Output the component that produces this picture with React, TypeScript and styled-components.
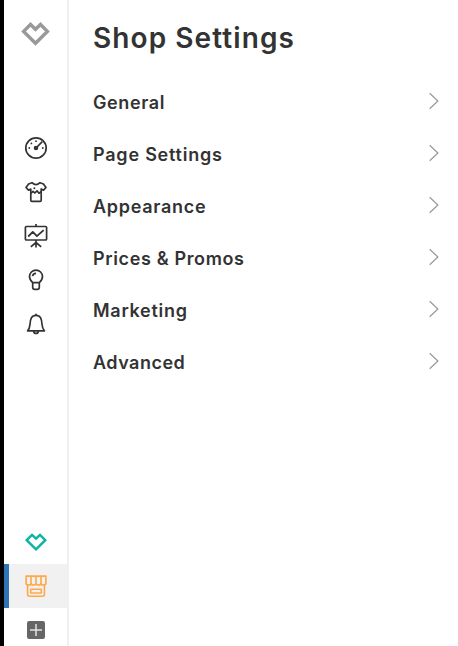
import React from "react";
import styled, { createGlobalStyle } from "styled-components";

const GlobalStyle = createGlobalStyle`
  * { box-sizing: border-box; }
  body { margin: 0; background: #fff; overflow: hidden; }
`;

const Layout = styled.div`
  display: flex;
  height: 646px;
  font-family: Inter, "Open Sans", sans-serif;
  color: #333;
  background: #fff;
`;

const Sidebar = styled.nav`
  display: flex;
  flex-direction: column;
  width: 69px;
  flex: none;
  border-left: 4px solid #000;
  border-right: 2px solid #f0f0f0;
`;

const Brand = styled.div`
  height: 126px;
  padding: 18px 0 0 16px;
  color: #999;
`;

const NavGroup = styled.div<{ $bottom?: boolean }>`
  display: flex;
  flex-direction: column;
  margin-top: ${(p) => (p.$bottom ? "auto" : "0")};
  margin-bottom: ${(p) => (p.$bottom ? "-6px" : "0")};
`;

const NavItem = styled.a<{ $color?: string; $active?: boolean }>`
  display: flex;
  align-items: center;
  height: 44px;
  padding-left: ${(p) => (p.$active ? "11px" : "16px")};
  border-left: ${(p) => (p.$active ? "5px solid #2f74b5" : "none")};
  background: ${(p) => (p.$active ? "#f1f1f1" : "transparent")};
  color: ${(p) => p.$color ?? "#333"};
`;

const Glyph = styled.svg<{ $stroke?: number }>`
  display: block;
  width: 32px;
  height: 32px;
  flex: none;
  fill: none;
  stroke: currentColor;
  stroke-width: ${(p) => p.$stroke ?? 1.7};
`;

const Main = styled.main`
  flex: 1;
  padding: 18px 18px 0 24px;
`;

const Title = styled.h1`
  margin: 0 0 19px;
  height: 40px;
  font-size: 28px;
  font-weight: 600;
  line-height: 40px;
  letter-spacing: 1.08px;
  white-space: nowrap;
`;

const SettingsRow = styled.a`
  display: flex;
  align-items: center;
  justify-content: space-between;
  height: 52px;
`;

const Label = styled.span<{ $tracking: number }>`
  font-size: 18px;
  font-weight: 600;
  line-height: 24px;
  letter-spacing: ${(p) => p.$tracking}px;
  white-space: nowrap;
`;

const Chevron = styled.svg`
  width: 12px;
  height: 18px;
  margin-bottom: 4px;
  fill: none;
  stroke: #999;
  stroke-width: 1.2;
`;

const rows = [
  { label: "General", tracking: 0.6 },
  { label: "Page Settings", tracking: 0.78 },
  { label: "Appearance", tracking: 0.72 },
  { label: "Prices & Promos", tracking: 0.64 },
  { label: "Marketing", tracking: 0.72 },
  { label: "Advanced", tracking: 0.5 },
];

const GaugeIcon = () => (
  <Glyph viewBox="0 0 32 32">
    <circle cx="16" cy="16" r="10.2" />
    <path d="M16 16 22.3 9.7" />
    <g fill="currentColor" stroke="none">
      <circle cx="16" cy="16" r="2.3" />
      <circle cx="9.3" cy="16" r=".9" />
      <circle cx="11.4" cy="11.4" r=".9" />
      <circle cx="16" cy="9.2" r=".9" />
      <circle cx="22.8" cy="16" r=".9" />
    </g>
  </Glyph>
);

const ShirtIcon = () => (
  <Glyph viewBox="0 0 32 32" strokeLinejoin="round">
    <path d="M12 6.7Q16 10.5 20 6.7L23.4 8 26 11.4 23.5 14.2 21.2 13V24.3Q21.2 25.3 20.2 25.3H11.8Q10.8 25.3 10.8 24.3V13L8.5 14.2 6 11.4 8.6 8Z" />
    <path d="M10.8 17.4 13 15.3 14.8 17 17 14.8 19 17.2 21.2 15.8" />
    <circle cx="14.4" cy="12.2" r="1" fill="currentColor" stroke="none" />
  </Glyph>
);

const BoardIcon = () => (
  <Glyph viewBox="0 0 32 32" strokeLinejoin="round">
    <rect x="5.4" y="6.5" width="21.2" height="13.5" rx="1" />
    <path d="M16 4V6.5M16 20V27.5M16 22.5 10.8 26.9M16 22.5 21.2 26.9" />
    <path d="M8.2 16.5 12.8 11.9 16.9 16.2 23.7 10.2" strokeWidth="1.8" />
  </Glyph>
);

const BulbIcon = () => (
  <Glyph viewBox="0 0 32 32">
    <path d="M12.7 18.7C11 17.3 9.5 15.3 9.5 12.6A6.5 6.5 0 0 1 22.5 12.6C22.5 15.3 21 17.3 19.3 18.7Z" />
    <path d="M12.7 18.7V23.2Q12.7 25.3 14.8 25.3H17.2Q19.3 25.3 19.3 23.2V18.7M12.5 12.2Q13 9.6 16 9.4" />
  </Glyph>
);

const BellIcon = () => (
  <Glyph viewBox="0 0 32 32" strokeLinejoin="round">
    <path d="M7.6 22.8C9.3 21 9.7 19.5 10 16.3C10.4 11.3 11.2 7.3 16 7.3S21.6 11.3 22 16.3C22.3 19.5 22.7 21 24.4 22.8Z" />
    <path d="M13.6 23Q14 25.5 16 25.5T18.4 23M16 5.7V7.3" />
  </Glyph>
);

const HeartIcon = () => (
  <Glyph viewBox="0 0 32 32" $stroke={2.4}>
    <path d="M6.7 14.2 12 8.9 16 12.7 20 8.9 25.3 14.2 16 23.4Z" />
  </Glyph>
);

const ShopIcon = () => (
  <Glyph viewBox="0 0 32 32" $stroke={1.6} strokeLinejoin="round">
    <path d="M6.1 6.1H25.9V13.2Q25.9 15 23.5 15 21 15 21 13.2 21 15 18.5 15 16 15 16 13.2 16 15 13.5 15 11 15 11 13.2 11 15 8.5 15 6.1 15 6.1 13.2ZM11 13.2V6.1M16 13.2V6.1M21 13.2V6.1" />
    <path d="M7.6 15V24.7Q7.6 26.2 9.1 26.2H22.9Q24.4 26.2 24.4 24.7V15M10.7 19.2H21.3V23H10.7Z" />
  </Glyph>
);

const AddIcon = () => (
  <Glyph viewBox="0 0 32 32" $stroke={1.5}>
    <rect x="7" y="7" width="18" height="18" rx="2.2" fill="currentColor" stroke="none" />
    <path d="M10 16H22M16 10V22" stroke="#e4e4e4" />
  </Glyph>
);

export default function App() {
  return (
    <Layout>
      <GlobalStyle />
      <Sidebar>
        <Brand>
          <Glyph viewBox="0 0 32 32" $stroke={3.4}>
            <path d="M3.6 13.4 10.5 6.5 15.5 11.3 20.5 6.5 27.4 13.4 15.5 25.3Z" />
          </Glyph>
        </Brand>
        <NavGroup>
          <NavItem><GaugeIcon /></NavItem>
          <NavItem><ShirtIcon /></NavItem>
          <NavItem><BoardIcon /></NavItem>
          <NavItem><BulbIcon /></NavItem>
          <NavItem><BellIcon /></NavItem>
        </NavGroup>
        <NavGroup $bottom>
          <NavItem $color="#0cb3a3"><HeartIcon /></NavItem>
          <NavItem $color="#ffa84a" $active><ShopIcon /></NavItem>
          <NavItem $color="#666"><AddIcon /></NavItem>
        </NavGroup>
      </Sidebar>
      <Main>
        <Title>Shop Settings</Title>
        {rows.map((row) => (
          <SettingsRow key={row.label}>
            <Label $tracking={row.tracking}>{row.label}</Label>
            <Chevron viewBox="0 0 12 18">
              <path d="M1.7 1.2 9.9 9 1.7 16.8" />
            </Chevron>
          </SettingsRow>
        ))}
      </Main>
    </Layout>
  );
}
